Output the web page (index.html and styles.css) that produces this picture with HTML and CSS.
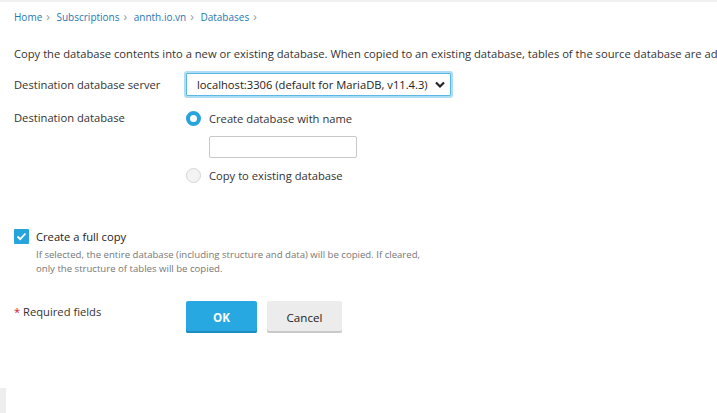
FILE: index.html
```html
<!DOCTYPE html>
<html>
<head>
<meta charset="utf-8">
<link rel="stylesheet" href="styles.css">
</head>
<body>
<div class="page">
  <nav class="crumbs">
    <a>Home</a><span class="sep">›</span>
    <a>Subscriptions</a><span class="sep">›</span>
    <a>annth.io.vn</a><span class="sep">›</span>
    <a>Databases</a><span class="sep">›</span>
  </nav>
  <p class="intro">Copy the database contents into a new or existing database. When copied to an existing database, tables of the source database are added to the destination database.</p>
  <div class="row row-server">
    <div class="label">Destination database server</div>
    <div class="field">
      <div class="select">
        <span>localhost:3306 (default for MariaDB, v11.4.3)</span>
        <svg class="caret" width="10" height="8" viewBox="0 0 10 8"><path d="M1 1.5 L5 5.5 L9 1.5" fill="none" stroke="#222" stroke-width="2.2"/></svg>
      </div>
    </div>
  </div>
  <div class="row row-db">
    <div class="label">Destination database</div>
    <div class="field">
      <div class="radio-line">
        <span class="radio on"></span><span>Create database with name</span>
      </div>
      <div class="name-input"></div>
      <div class="radio-line">
        <span class="radio"></span><span>Copy to existing database</span>
      </div>
    </div>
  </div>
  <div class="check-block">
    <div class="check-line">
      <span class="checkbox"><svg width="15" height="15" viewBox="0 0 15 15"><path d="M3.5 7.5 L6.2 10.2 L11.5 4.5" fill="none" stroke="#fff" stroke-width="1.8"/></svg></span>
      <span>Create a full copy</span>
    </div>
    <div class="hint">If selected, the entire database (including structure and data) will be copied. If cleared,<br>only the structure of tables will be copied.</div>
  </div>
  <div class="row row-actions">
    <div class="label"><span class="req">*</span> Required fields</div>
    <div class="buttons">
      <button class="btn btn-ok">OK</button>
      <button class="btn btn-cancel">Cancel</button>
    </div>
  </div>
</div>
<div class="corner"></div>
</body>
</html>
```
FILE: styles.css
```css
html, body {
  margin: 0;
  padding: 0;
  background: #fff;
  overflow: hidden;
  height: 413px;
}
body {
  font-family: "Open Sans", "Liberation Sans", sans-serif;
  font-size: 11.2px;
  color: #222;
  border-top: 2px solid #f0f0f0;
  position: relative;
  box-sizing: border-box;
}
.page {
  padding: 0 0 0 14px;
  width: 1200px;
}
.crumbs {
  font-size: 10px;
  padding-top: 6px;
  height: 17px;
  line-height: 17px;
}
.crumbs a { color: #1f78b4; }
.sep {
  color: #999;
  margin: 0 4px;
  font-size: 12px;
}
.intro {
  margin: 20px 0 0 0;
  line-height: 17px;
  white-space: nowrap;
  color: #333;
}
.row {
  display: flex;
}
.label {
  width: 170px;
  flex: none;
  color: #333;
}
.row-server {
  margin-top: 9px;
  align-items: center;
}
.select {
  box-sizing: border-box;
  width: 269px;
  height: 27px;
  border: 2px solid #aeddf5;
  border-radius: 3px;
  box-shadow: inset 0 0 0 1px #5ab7e6;
  display: flex;
  align-items: center;
  justify-content: space-between;
  padding: 0 6px 0 11px;
  font-size: 11.2px;
  color: #222;
  white-space: nowrap;
}
.caret { margin-top: 1px; }
.row-db {
  margin-top: 12px;
}
.row-db .label { line-height: 16px; }
.field {
  display: flex;
  flex-direction: column;
}
.radio-line {
  display: flex;
  align-items: center;
  height: 16px;
  padding-left: 2px;
  color: #333;
}
.radio {
  width: 15px;
  height: 15px;
  border-radius: 50%;
  box-sizing: border-box;
  border: 1px solid #d6d6d6;
  background: #f3f3f3;
  margin-right: 8px;
  flex: none;
}
.radio.on {
  border: 4px solid #28a4dc;
  background: #fff;
}
.name-input {
  box-sizing: border-box;
  width: 148px;
  height: 22px;
  border: 1px solid #c8c8c8;
  border-radius: 2px;
  margin: 10px 0 9px 25px;
}
.check-block {
  margin-top: 45px;
}
.check-line {
  display: flex;
  align-items: center;
  height: 16px;
  color: #222;
}
.checkbox {
  width: 15px;
  height: 15px;
  background: #28a4dc;
  border-radius: 1px;
  margin-right: 7px;
  display: flex;
}
.hint {
  margin: 4px 0 0 22px;
  font-size: 9.6px;
  line-height: 14px;
  color: #777;
}
.row-actions {
  margin-top: 25px;
}
.row-actions .label {
  width: 172px;
  padding-top: 3px;
}
.req { color: #d0103a; }
.buttons {
  display: flex;
  gap: 10px;
}
.btn {
  font-family: "Open Sans", "Liberation Sans", sans-serif;
  font-size: 11.6px;
  height: 32px;
  border: none;
  border-radius: 2px;
  padding: 0;
}
.btn-ok {
  width: 71px;
  background: #28a8e0;
  color: #fff;
  font-weight: bold;
  box-shadow: inset 0 -2px 0 #1d8cc0;
}
.btn-cancel {
  width: 75px;
  background: #ececec;
  color: #222;
  box-shadow: inset 0 -2px 0 #c9c9c9;
}
.corner {
  position: absolute;
  left: 0;
  top: 386px;
  width: 6px;
  height: 27px;
  background: #eeeeee;
}
```
